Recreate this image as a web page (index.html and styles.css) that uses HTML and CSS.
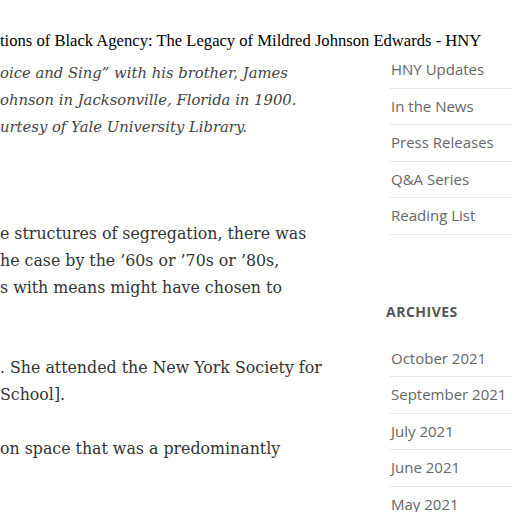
FILE: index.html
```html
<!DOCTYPE html>
<html>
<head>
<meta charset="utf-8">
<link rel="stylesheet" href="styles.css">
</head>
<body>
<div class="doc-title">tions of Black Agency: The Legacy of Mildred Johnson Edwards - HNY</div>
<div class="layout">
  <main class="article">
    <p class="caption">
      <span class="line">oice and Sing” with his brother, James</span>
      <span class="line">ohnson in Jacksonville, Florida in 1900.</span>
      <span class="line">urtesy of Yale University Library.</span>
    </p>
    <p class="para first">
      <span class="line">e structures of segregation, there was</span>
      <span class="line">he case by the ’60s or ’70s or ’80s,</span>
      <span class="line">s with means might have chosen to</span>
    </p>
    <p class="para second">
      <span class="line">. She attended the New York Society for</span>
      <span class="line">School].</span>
    </p>
    <p class="para">
      <span class="line">on space that was a predominantly</span>
    </p>
  </main>
  <aside class="sidebar">
    <ul class="links">
      <li><a href="#">HNY Updates</a></li>
      <li><a href="#">In the News</a></li>
      <li><a href="#">Press Releases</a></li>
      <li><a href="#">Q&amp;A Series</a></li>
      <li><a href="#">Reading List</a></li>
    </ul>
    <h3 class="widget-title">ARCHIVES</h3>
    <ul class="links">
      <li><a href="#">October 2021</a></li>
      <li><a href="#">September 2021</a></li>
      <li><a href="#">July 2021</a></li>
      <li><a href="#">June 2021</a></li>
      <li><a href="#">May 2021</a></li>
    </ul>
  </aside>
</div>
</body>
</html>
```
FILE: styles.css
```css
html, body {
  margin: 0;
  padding: 0;
  background: #fff;
  overflow: hidden;
  width: 512px;
  height: 512px;
}
.doc-title {
  font-family: "Liberation Serif", serif;
  font-size: 16.6px;
  color: #000;
  white-space: nowrap;
  padding-top: 30px;
  line-height: 22px;
}
.layout {
  display: flex;
  height: 460px;
  overflow: hidden;
}
.article {
  width: 386px;
  flex: none;
  font-family: "DejaVu Serif", serif;
  color: #333;
  padding-top: 7px;
}
.article p {
  margin: 0;
}
.line {
  display: block;
  white-space: nowrap;
}
.caption {
  font-style: italic;
  font-size: 14.8px;
  line-height: 27px;
  color: #444;
}
.para {
  font-size: 15.8px;
  line-height: 27px;
}
.article .para {
  margin-bottom: 53px;
}
.article .para.first {
  margin-top: 80px;
}
.article .para.second {
  margin-bottom: 27px;
}
.sidebar {
  flex: none;
  width: 126px;
  font-family: "Open Sans", sans-serif;
}
.links {
  list-style: none;
  margin: 0;
  padding: 0 0 0 4px;
}
.links li {
  border-bottom: 1px solid #e6e6e6;
  height: 35.5px;
  line-height: 35px;
  font-size: 15px;
}
.links a {
  color: #666;
  text-decoration: none;
  padding-left: 1px;
}
.widget-title {
  font-size: 14px;
  font-weight: 700;
  letter-spacing: 0.5px;
  color: #555;
  margin: 67px 0 20px 0;
}
```
